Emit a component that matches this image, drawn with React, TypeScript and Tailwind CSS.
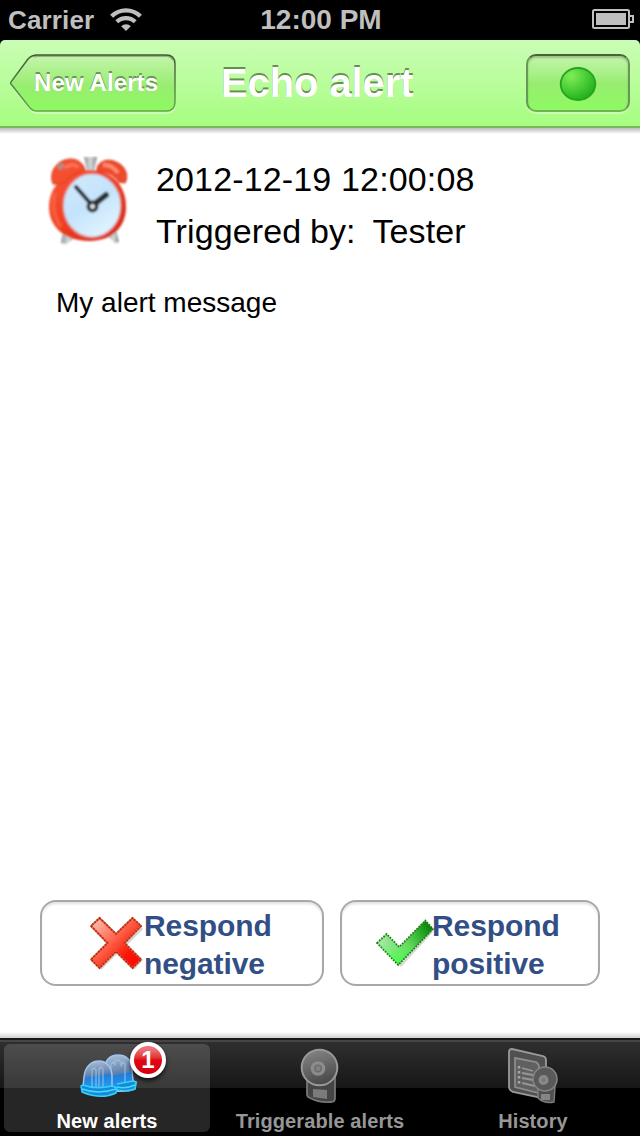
import type { ReactNode } from 'react';

const WifiIcon = () => (
  <svg className="w-8 h-6" viewBox="0 0 32 24" fill="none" stroke="#bfbfbf" strokeWidth="4.2">
    <path d="M1.6 8.2A20.5 20.5 0 0 1 30.4 8.2" />
    <path d="M6.8 13.8A13.2 13.2 0 0 1 25.2 13.8" />
    <path d="M16 23L11.2 18.3A6.5 6.5 0 0 1 20.8 18.3Z" fill="#bfbfbf" stroke="none" />
  </svg>
);

const BatteryIcon = () => (
  <svg className="w-[42px] h-5" viewBox="0 0 42 20" fill="none" stroke="#bfbfbf" strokeWidth="2">
    <rect x="1" y="1" width="36" height="18" rx="1.5" />
    <rect x="4" y="4" width="30" height="12" fill="#bfbfbf" stroke="none" />
    <path d="M38 7h3v6h-3" />
  </svg>
);

const AlarmClockIcon = () => (
  <svg className="w-[85px] h-[91px]" viewBox="0 0 85 91">
    <defs>
      <linearGradient id="clockRed" x1="0" y1="0" x2="1" y2="1">
        <stop offset="0" stopColor="#f9573a" />
        <stop offset="0.45" stopColor="#f04020" />
        <stop offset="1" stopColor="#cf241a" />
      </linearGradient>
      <linearGradient id="clockFace" x1="0" y1="0" x2="0.6" y2="1">
        <stop offset="0" stopColor="#d2eafd" />
        <stop offset="0.55" stopColor="#c4e3fc" />
        <stop offset="1" stopColor="#dff4ff" />
      </linearGradient>
      <linearGradient id="clockMetal" x1="0" y1="0" x2="1" y2="0">
        <stop offset="0" stopColor="#8e9696" />
        <stop offset="0.5" stopColor="#d5dada" />
        <stop offset="1" stopColor="#7f8585" />
      </linearGradient>
      <filter id="clockSoft">
        <feGaussianBlur stdDeviation="0.9" />
      </filter>
    </defs>
    <g filter="url(#clockSoft)">
      <path d="M17 75L15 87L20 88L30 81Z" fill="url(#clockMetal)" />
      <path d="M62 80L69 87L73 86L70 73Z" fill="url(#clockMetal)" />
      <path d="M38 1h13l-3 14h-7z" fill="url(#clockMetal)" />
      <path d="M43 14C20 15 3 29 3 51C3 71 19 85 43 85C66 85 80 71 80 51C80 29 66 14 43 14Z" fill="url(#clockRed)" />
      <path d="M7 28C2 15 12 3 25 3C32 3 38 8 39 14C31 16 24 19 19 26Q14 29 7 28Z" fill="#f4502f" stroke="#d63b23" />
      <path d="M51 12C53 5 62 2 70 6C80 10 83 20 79 27L73 26C68 19 62 16 51 15Z" fill="#ee482b" stroke="#d23522" />
      <path d="M11 12l3-5 5 2-4 5z" fill="#a8918c" />
      <path d="M57 9q9-1 15 8" stroke="#ff8b71" strokeWidth="4" fill="none" />
      <path d="M19 12q7-6 13-1" stroke="#fb785c" strokeWidth="3" fill="none" />
      <path d="M9 37Q4 55 15 71" stroke="#fb7359" strokeWidth="4" fill="none" opacity="0.5" />
      <ellipse cx="46" cy="49.500" rx="29" ry="32" fill="url(#clockFace)" stroke="#e27d78" strokeWidth="1.5" />
      <path d="M45 48L30 31" stroke="#222a2e" strokeWidth="4" strokeLinecap="round" />
      <path d="M46 50L60 39" stroke="#2a3033" strokeWidth="6" strokeLinecap="round" />
      <circle cx="46.500" cy="50.500" r="4.200" fill="#e2e6e6" stroke="#252a2d" strokeWidth="3.500" />
    </g>
  </svg>
);

const CrossIcon = () => (
  <svg className="w-[56px] h-[56px]" viewBox="0 0 56 56">
    <defs>
      <linearGradient id="cross" x1="0" y1="0" x2="1" y2="1">
        <stop offset="0.1" stopColor="#ffb5a5" />
        <stop offset="0.45" stopColor="#ff6048" />
        <stop offset="0.72" stopColor="#fa1707" />
        <stop offset="1" stopColor="#f00" />
      </linearGradient>
    </defs>
    <path d="M13 5L30 21L46 5L55 14L39 30L55 45L46 55L30 38L13 55L5 46L20 30L5 14Z" fill="#000" opacity="0.18" />
    <path
      d="M11.500 3L28 19L44.500 3L53 11L36.500 28L53 44.500L44.500 53L28 36.500L11.500 53L3 44.500L19.500 28L3 11Z"
      fill="url(#cross)"
      stroke="#e4593a"
      strokeWidth="1.8"
    />
    <path
      d="M11.500 3L28 19L44.500 3L53 11L36.500 28L53 44.500L44.500 53L28 36.500L11.500 53L3 44.500L19.500 28L3 11Z"
      fill="none"
      stroke="#b02c14"
      strokeWidth="1.8"
      strokeDasharray="1.6 1.6"
    />
  </svg>
);

const CheckIcon = () => (
  <svg className="w-[58px] h-[50px]" viewBox="0 0 60 50" preserveAspectRatio="none">
    <defs>
      <linearGradient id="check" x1="0.1" y1="0.6" x2="1" y2="0.2">
        <stop offset="0" stopColor="#a8e9a5" />
        <stop offset="0.45" stopColor="#68d562" />
        <stop offset="0.75" stopColor="#2cae29" />
        <stop offset="1" stopColor="#087d08" />
      </linearGradient>
      <linearGradient id="checkGlow" x1="0" y1="0" x2="0" y2="1">
        <stop offset="0.5" stopColor="#37ff37" stopOpacity="0" />
        <stop offset="1" stopColor="#37ff37" stopOpacity="0.9" />
      </linearGradient>
    </defs>
    <path d="M4 27L13 20L26 33L52 6L59 14L26 49Z" fill="#000" opacity="0.15" />
    <path d="M1 25L11 16L24 29L51 2.500L59 11L23 47Z" fill="url(#check)" />
    <path
      d="M1 25L11 16L24 29L51 2.500L59 11L23 47Z"
      fill="url(#checkGlow)"
      stroke="#178317"
      strokeWidth="1.8"
      strokeDasharray="1.8 1.2"
    />
  </svg>
);

const DomeIcon = () => (
  <svg className="ml-[3px] w-[60px] h-[48px]" viewBox="0 0 60 48">
    <defs>
      <linearGradient id="dome" x1="0.4" y1="0" x2="0.55" y2="1">
        <stop offset="0" stopColor="#a9bbd6" />
        <stop offset="0.5" stopColor="#5f7fa8" />
        <stop offset="0.54" stopColor="#1f7fdc" />
        <stop offset="1" stopColor="#2a9ff2" />
      </linearGradient>
    </defs>
    <g strokeWidth="1.5" strokeLinejoin="round">
      <path d="M26 31L25 18C26 8 31 3 39 3C48 3 53 9 53 18L54 29L57 30L56 37Q48 40 38 39L27 40Z" fill="url(#dome)" stroke="#9cc6ee" />
      <path d="M32 26V12l2-2 2 3V9l3-1 3 2v4l2-4 2 2v18" fill="none" stroke="#9fc4e8" strokeOpacity="0.75" strokeWidth="1.300" />
      <path d="M38 32L54 29L57 30L56 37Q48 40 38 38" fill="#168bd5" stroke="#34cfff" />
      <path d="M4 35L5 25C6 15 12 9 20 9C29 9 33 17 33 25V35Q18 40 4 35Z" fill="url(#dome)" stroke="#9cc6ee" />
      <path d="M13 36V17l2-1 2 2v19M20 37V17l2-2 2 2v20" fill="none" stroke="#9fc4e8" strokeOpacity="0.75" strokeWidth="1.300" />
      <path d="M2 34L4 33Q17 38 33 34L38 36L37 41Q22 48 3 40Z" fill="#168bd5" stroke="#34cfff" />
      <path d="M3 37Q19 43 37 37M38 35Q47 37 56 33" fill="none" stroke="#43d8ff" />
    </g>
  </svg>
);

const SirenIcon = () => (
  <svg className="w-10 h-[56px]" viewBox="0 0 40 56">
    <defs>
      <linearGradient id="siren" x1="0.2" y1="0" x2="0.5" y2="1">
        <stop offset="0" stopColor="#858585" />
        <stop offset="1" stopColor="#484848" />
      </linearGradient>
    </defs>
    <path d="M7 30V46Q7 49 10 50Q19 55 31 54Q35 54 35 50V28Z" fill="#454545" stroke="#777" strokeWidth="1.800" strokeLinejoin="round" />
    <path d="M13 41l14 1v9l-14-2z" fill="#7b7b7b" />
    <circle cx="19.500" cy="19.500" r="17.800" fill="url(#siren)" stroke="#999" strokeWidth="2" />
    <circle cx="18" cy="20.500" r="7.300" fill="#8c8c8c" />
    <circle cx="18" cy="20.500" r="3.200" fill="#828282" stroke="#6c6c6c" strokeWidth="1.500" />
  </svg>
);

const HistoryIcon = () => (
  <svg className="w-[52px] h-[58px]" viewBox="0 0 52 58">
    <path
      d="M5 2L36 9Q39 10 39 13V52L6 45Q2 43 2 40V5Q2 2 5 2Z"
      fill="#505050"
      stroke="#999"
      strokeWidth="1.800"
    />
    <path d="M8 11L29 15Q32 17 32 20V46L8 40Z" fill="#606060" stroke="#8b8b8b" strokeWidth="1.800" />
    <path d="M15 21l11 3M15 26l11 2M15 31l11 2M15 36l13 3" stroke="#969696" strokeWidth="1.800" />
    <path d="M12 19v2.500M12 24v2.500M12 29v2.500M12 34v2.500" stroke="#a5a5a5" strokeWidth="2.500" />
    <path d="M31 40V51Q37 57 47 55L48 39Z" fill="#505050" stroke="#7b7b7b" strokeWidth="1.500" />
    <path d="M34 47h9v6h-9z" fill="#858585" />
    <circle cx="38" cy="32" r="12" fill="#595959" stroke="#858585" strokeWidth="1.500" />
    <circle cx="36.500" cy="33" r="5" fill="#898989" />
    <circle cx="36.500" cy="33" r="2" fill="#787878" />
  </svg>
);

const StatusBar = () => (
  <div className="flex h-10 shrink-0 items-center bg-black text-[#bfbfbf] font-bold">
    <div className="flex flex-1 items-center gap-4 pl-2">
      <span className="text-[26px] leading-10 tracking-[0.15px]">Carrier</span>
      <WifiIcon />
    </div>
    <span className="text-[28px] leading-10">12:00 PM</span>
    <div className="flex flex-1 justify-end pr-1.5 -mt-0.5">
      <BatteryIcon />
    </div>
  </div>
);

const NavBar = () => (
  <header className="bg-black shrink-0">
    <div className="flex h-[88px] items-start rounded-t-[5px] border-b-2 border-[#79b75b] bg-linear-to-b from-[#cafdb5] to-[#a6fd7f] pt-3.5 pl-2.5 pr-2.5">
      <button className="grid h-[60px] w-[167px]">
        <svg className="col-start-1 row-start-1 h-[60px] w-[167px]" viewBox="0 0 167 60">
          <defs>
            <linearGradient id="back" x1="0" y1="0" x2="0" y2="1">
              <stop offset="0" stopColor="#c4f5ac" />
              <stop offset="0.55" stopColor="#98ed71" />
              <stop offset="1" stopColor="#8dfa61" />
            </linearGradient>
            <linearGradient id="backEdge" x1="0" y1="0" x2="0" y2="1">
              <stop offset="0" stopColor="#42593a" />
              <stop offset="1" stopColor="#65a74b" />
            </linearGradient>
          </defs>
          <path d="M26 2H156Q165 2 165 11V50Q165 59 156 59H27Q23 59 20 55L1 31" fill="none" stroke="#d4ffc2" strokeWidth="1.500" />
          <path
            d="M27 1H156Q165 1 165 10V48Q165 57 156 57H27Q23 57 20 54L1 30Q0 29 1 28L18 5Q22 1 27 1Z"
            fill="url(#back)"
            stroke="url(#backEdge)"
            strokeWidth="1.500"
          />
          <path d="M24 3Q25 2 28 2H156Q161 2 163 6" fill="none" stroke="#42593a" strokeOpacity="0.4" strokeWidth="2" />
        </svg>
        <span className="col-start-1 row-start-1 pl-6 text-left text-2xl leading-[58px] tracking-[0.1px] font-bold text-white [text-shadow:0_-2px_0_#6a9852]">
          New Alerts
        </span>
      </button>
      <h1 className="flex-1 pl-11 text-[40px] leading-[58px] tracking-[-0.1px] font-bold text-white [text-shadow:0_-2px_0_#638f50]">
        Echo alert
      </h1>
      <button className="flex h-[58px] w-[104px] items-center justify-center rounded-[10px] border-2 border-t-[#49623d] border-x-[#69975a] border-b-[#70b254] bg-linear-to-b from-[#c4f5ac] via-[#98ed71] to-[#8dfa61] shadow-[0_2px_0_#c8ffb0,inset_0_2px_2px_#6c935980]">
        <svg className="h-9 w-[38px]" viewBox="0 0 38 36">
          <defs>
            <radialGradient id="online" cx="0.3" cy="0.25" r="0.85">
              <stop offset="0" stopColor="#80ee56" />
              <stop offset="0.5" stopColor="#4cce37" />
              <stop offset="1" stopColor="#1eaa1a" />
            </radialGradient>
          </defs>
          <ellipse cx="19" cy="19" rx="17.300" ry="16" fill="url(#online)" stroke="#25a51d" strokeWidth="1.800" />
        </svg>
      </button>
    </div>
  </header>
);

interface ResponseButtonProps {
  icon: ReactNode;
  label: string;
  className: string;
}

const ResponseButton = ({ icon, label, className }: ResponseButtonProps) => (
  <button
    className={`flex h-[86px] items-center rounded-[16px] border-2 border-[#a8a8a8] bg-white text-left shadow-[inset_0_3px_3px_-1px_#00000020] ${className}`}
  >
    {icon}
    <span className="w-32 pt-[3px] text-[30px] leading-[38px] tracking-[-0.1px] font-bold text-[#324f85]">{label}</span>
  </button>
);

interface TabProps {
  icon: ReactNode;
  label: string;
  active?: boolean;
  badge?: number;
}

const Tab = ({ icon, label, active, badge }: TabProps) => (
  <button
    className={`relative flex h-[88px] w-[206px] flex-col items-center rounded-md ${
      active ? 'bg-white/15 text-white' : 'text-[#979797]'
    }`}
  >
    <span className="flex h-[66px] items-center justify-center pb-0.5">{icon}</span>
    <span className="text-xl leading-[22px] tracking-[0.1px] font-bold whitespace-nowrap">{label}</span>
    {badge && (
      <span className="absolute -top-0.5 left-[126px] flex h-9 w-9 items-center justify-center rounded-full border-4 border-white bg-linear-to-b from-[#ed7379] from-10% via-[#df0715] via-50% to-[#d6000d] text-2xl leading-none font-bold text-white shadow-[0_3px_4px_#000000b0]">
        {badge}
      </span>
    )}
  </button>
);

const App = () => {
  return (
    <div className="flex h-[1136px] w-[640px] flex-col overflow-hidden bg-white font-['Liberation_Sans',Arial,sans-serif] text-black">
      <StatusBar />
      <NavBar />

      <main className="flex flex-1 flex-col bg-white">
        <div className="h-1.5 bg-linear-to-b from-[#bcbcbc] to-white" />
        <div className="flex pt-[19px] pl-[46px]">
          <div className="pt-[3px]">
            <AlarmClockIcon />
          </div>
          <div className="pl-[25px] text-[34px] leading-[52px]">
            <p className="tracking-[0.15px]">2012-12-19 12:00:08</p>
            <p className="whitespace-pre tracking-[0.1px] [word-spacing:-0.8px]">Triggered by:  Tester</p>
          </div>
        </div>
        <p className="pt-[26px] pl-14 text-[28px] leading-10">My alert message</p>

        <div className="mt-auto flex gap-4 pl-10 pb-[46px]">
          <ResponseButton icon={<CrossIcon />} label="Respond negative" className="w-[284px] pl-[46px]" />
          <ResponseButton
            icon={
              <span className="-mr-0.5">
                <CheckIcon />
              </span>
            }
            label="Respond positive"
            className="w-[260px] pl-[34px]"
          />
        </div>
        <div className="h-1.5 bg-linear-to-b from-white to-[#d0d0d0]" />
      </main>

      <nav className="flex h-[98px] shrink-0 justify-between border-t-2 border-[#191919] bg-linear-to-b from-[#303030] to-[#171717] to-50%">
        <div className="flex w-full justify-between border-t-2 border-[#454545] bg-[linear-gradient(transparent_46px,black_46px)] px-1 pt-0.5">
          <Tab icon={<DomeIcon />} label="New alerts" active badge={1} />
          <Tab icon={<SirenIcon />} label="Triggerable alerts" />
          <Tab icon={<HistoryIcon />} label="History" />
        </div>
      </nav>
    </div>
  );
};

export default App;
